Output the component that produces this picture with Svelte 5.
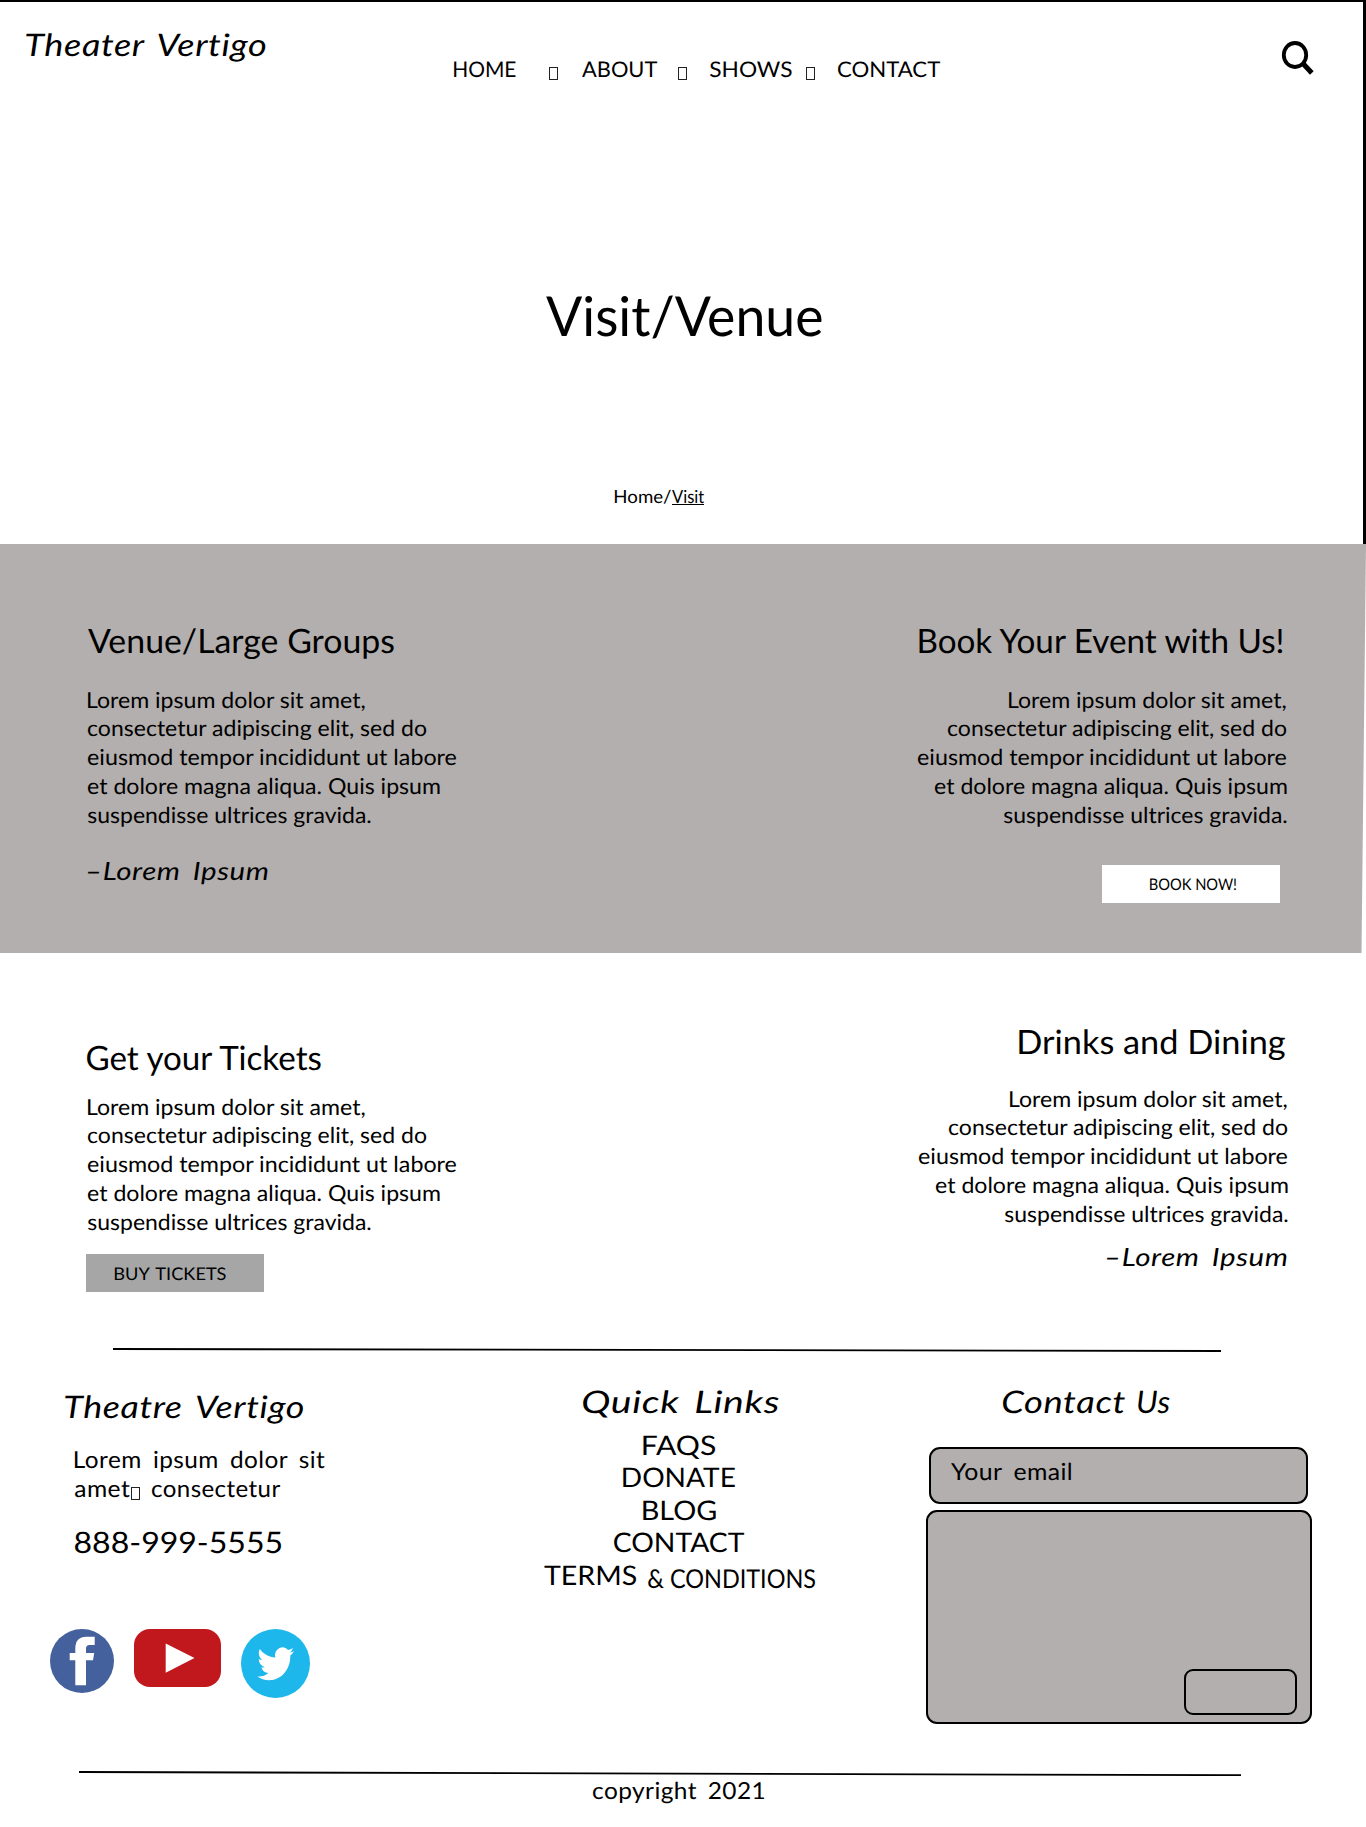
<script>
  const lorem = [
    ['Lorem ipsum dolor sit amet,', 277],
    ['consectetur adipiscing elit, sed do', 338.5],
    ['eiusmod tempor incididunt ut labore', 368.5],
    ['et dolore magna aliqua. Quis ipsum', 351.5],
    ['suspendisse ultrices gravida.', 282.5]
  ];
  const nav = [
    ['HOME', 61.5],
    ['ABOUT', 75],
    ['SHOWS', 81.5],
    ['CONTACT', 102]
  ];
  const links = [
    ['FAQS', 72],
    ['DONATE', 112],
    ['BLOG', 73],
    ['CONTACT', 130]
  ];

  // Stretches a single line of text so that its ink spans exactly `width` pixels.
  function stretch(node, width) {
    const css = getComputedStyle(node);
    const ctx = document.createElement('canvas').getContext('2d');
    // Measured at ten times the size, which keeps fractions of a pixel.
    const size = parseFloat(css.fontSize);
    ctx.font = `${css.fontStyle} ${css.fontWeight} ${size * 10}px ${css.fontFamily}`;
    const text = node.textContent;
    const m = ctx.measureText(text);
    const words = (text.split(' ').length - 1) * (parseFloat(css.wordSpacing) || 0);
    const letters = (text.length - 1) * (parseFloat(css.letterSpacing) || 0);
    const left = m.actualBoundingBoxLeft / 10;
    const ink = left + m.actualBoundingBoxRight / 10 + words + letters;
    node.style.width = `${width}px`;
    node.style.textIndent = `${left}px`;
    node.style.transform = `scaleX(${width / ink})`;
  }
</script>

{#snippet line(text, width)}<span class="line" use:stretch={width}>{text}</span>{/snippet}

{#snippet copy()}
  <p class="copy">
    {#each lorem as [text, width]}{@render line(text, width)}{/each}
  </p>
{/snippet}

<div class="page">
  <header class="hero">
    <div class="topbar">
      <a class="script logo" href="#home">{@render line('Theater Vertigo', 241)}</a>
      <nav>
        {#each nav as [label, width], i}
          <div class="nav-item">
            <a href="#{label.toLowerCase()}">{@render line(label, width)}</a>
            {#if i < nav.length - 1}<i class="box"></i>{/if}
          </div>
        {/each}
      </nav>
      <svg class="search" width="34" height="36" viewBox="0 0 34 36" aria-label="Search">
        <ellipse cx="15" cy="15" rx="11.2" ry="12" fill="none" stroke="#000" stroke-width="3.8" />
        <path d="M23 23.5 31.8 33" stroke="#000" stroke-width="5" />
      </svg>
    </div>
    <h1>{@render line('Visit/Venue', 276)}</h1>
    <div class="crumbs">{@render line('Home/', 56)}<u>{@render line('Visit', 32)}</u></div>
  </header>

  <section class="band">
    <article>
      <h2>{@render line('Venue/Large Groups', 306)}</h2>
      {@render copy()}
      <div class="script sign">{@render line('–Lorem Ipsum', 179.5)}</div>
    </article>
    <article class="right">
      <h2>{@render line('Book Your Event with Us!', 366)}</h2>
      {@render copy()}
      <button class="book">{@render line('BOOK NOW!', 86)}</button>
    </article>
  </section>

  <section class="plain">
    <article class="tickets">
      <h2>{@render line('Get your Tickets', 236.5)}</h2>
      {@render copy()}
      <button class="buy">{@render line('BUY TICKETS', 112)}</button>
    </article>
    <article class="right drinks">
      <h2>{@render line('Drinks and Dining', 266)}</h2>
      {@render copy()}
      <div class="script sign">{@render line('–Lorem Ipsum', 179.5)}</div>
    </article>
  </section>

  <svg class="rule first" width="1108" height="4" viewBox="0 0 1108 4">
    <path d="M0 1 1108 3" stroke="#000" stroke-width="1.8" />
  </svg>

  <footer>
    <div class="about">
      <div class="script brand">{@render line('Theatre Vertigo', 239)}</div>
      <div class="blurb">
        <div>{@render line('Lorem ipsum dolor sit', 250)}</div>
        <div class="blurb-row">
          {@render line('amet', 54.5)}<i class="box"></i>{@render line('consectetur', 128)}
        </div>
      </div>
      <div class="phone">{@render line('888-999-5555', 206)}</div>
      <div class="social">
        <svg width="64" height="64" viewBox="0 0 64 64" aria-label="Facebook">
          <circle cx="32" cy="32" r="32" fill="#45619d" />
          <path fill="#fff" d="M25.3 56.3V31.3H19.7V24H25.3V19.5Q25.3 7.7 36.5 7.7H44.7V16H39.5Q36 16 36 19.5V24H44.2L43 31.3H36V56.3Z" />
        </svg>
        <svg width="87" height="58" viewBox="0 0 87 58" aria-label="YouTube">
          <rect width="87" height="58" rx="16" fill="#c1181e" />
          <path fill="#fff" d="M31.7 14.5V43.7L60.5 29Z" />
        </svg>
        <svg width="69" height="69" viewBox="0 0 69 69" aria-label="Twitter">
          <circle cx="34.5" cy="34.5" r="34.5" fill="#1db7eb" />
          <path transform="translate(16.3 14.6) scale(1.53 1.68)" fill="#fff" d="M23.953 4.57a10 10 0 01-2.825.775 4.958 4.958 0 002.163-2.723c-.951.555-2.005.959-3.127 1.184a4.92 4.92 0 00-8.384 4.482C7.69 8.095 4.067 6.13 1.64 3.162a4.822 4.822 0 00-.666 2.475c0 1.71.87 3.213 2.188 4.096a4.904 4.904 0 01-2.228-.616v.06a4.923 4.923 0 003.946 4.827 4.996 4.996 0 01-2.212.085 4.936 4.936 0 004.604 3.417 9.867 9.867 0 01-6.102 2.105c-.39 0-.779-.023-1.17-.067a13.995 13.995 0 007.557 2.209c9.053 0 13.998-7.496 13.998-13.985 0-.21 0-.42-.015-.63A9.935 9.935 0 0024 4.59z" />
        </svg>
      </div>
    </div>

    <div class="quick">
      <div class="script title">{@render line('Quick Links', 196)}</div>
      {#each links as [label, width]}
        <a href="#{label.toLowerCase()}">{@render line(label, width)}</a>
      {/each}
      <a class="terms" href="#terms">
        {@render line('TERMS', 92)}<span class="cond">{@render line('& CONDITIONS', 167)}</span>
      </a>
    </div>

    <div class="contact">
      <div class="script title">{@render line('Contact', 122)}{@render line('Us', 32)}</div>
      <div class="field">{@render line('Your email', 120.5)}</div>
      <div class="message"><button class="send" aria-label="Send"></button></div>
    </div>
  </footer>

  <svg class="rule last" width="1162" height="5" viewBox="0 0 1162 5">
    <path d="M0 1 1162 4.2" stroke="#000" stroke-width="1.8" />
  </svg>
  <div class="copyright">{@render line('copyright 2021', 171)}</div>
</div>

<style>
  :global(body) {
    margin: 0;
    background: #fff;
  }
  .page {
    width: 1366px;
    height: 1827px;
    overflow: hidden;
    color: #000;
    font-family: Lato, 'Liberation Sans', sans-serif;
    text-rendering: geometricPrecision;
  }
  .page * {
    box-sizing: border-box;
  }
  .line {
    display: block;
    flex: none;
    white-space: pre;
    transform-origin: 0 50%;
  }
  svg {
    display: block;
    flex: none;
  }
  a {
    color: inherit;
    text-decoration: none;
  }
  h1,
  h2,
  p {
    margin: 0;
    font-weight: 400;
  }
  button {
    display: block;
    border: 0;
    border-radius: 0;
    padding: 0;
    color: #000;
    font-family: inherit;
    text-align: left;
    text-rendering: inherit;
  }
  .script {
    font-style: italic;
    font-size: 31px;
    line-height: 40px;
    letter-spacing: 0.5px;
    word-spacing: 4px;
  }
  .box {
    display: block;
    flex: none;
    width: 9px;
    height: 13px;
    border: 1px solid #222;
  }

  .hero {
    height: 544px;
    border-top: 2px solid #000;
    border-right: 3px solid #000;
  }
  .topbar {
    display: flex;
    align-items: flex-start;
    height: 118px;
    padding-left: 26px;
  }
  .logo {
    width: 427.5px;
    padding-top: 22px;
  }
  nav {
    display: grid;
    grid-template-columns: repeat(4, 128.3px);
    padding-top: 54px;
    font-size: 21.5px;
    line-height: 26px;
  }
  .nav-item {
    display: flex;
  }
  .nav-item a {
    flex: none;
    width: 95.8px;
  }
  .nav-item:last-child a {
    width: auto;
  }
  .nav-item .box {
    margin-top: 10.5px;
  }
  .search {
    margin: 38px 0 0 313px;
  }
  h1 {
    margin: 162.4px 0 0 545.5px;
    font-size: 55px;
    line-height: 66px;
  }
  .crumbs {
    display: flex;
    gap: 0.5px;
    margin: 136.6px 0 0 615px;
    font-size: 18px;
    line-height: 22px;
  }
  .crumbs u {
    height: 20.5px;
    border-bottom: 1px solid #000;
    text-decoration: none;
  }

  .band,
  .plain {
    display: flex;
    justify-content: space-between;
    align-items: flex-start;
  }
  .band {
    height: 409px;
    padding: 77px 80px 0 88px;
    background: #b3afae;
    clip-path: polygon(0 0, 100% 0, 1361.5px 100%, 0 100%);
  }
  .plain {
    height: 395px;
    padding: 0 79px 0 87px;
  }
  .right {
    display: flex;
    flex-direction: column;
    align-items: flex-end;
  }
  h2 {
    font-size: 33.5px;
    line-height: 40px;
  }
  .copy {
    padding-top: 24.6px;
    font-size: 22px;
    line-height: 28.8px;
  }
  .right .copy {
    display: flex;
    flex-direction: column;
    align-items: flex-end;
  }
  .right h2 {
    margin-right: 1px;
  }
  .sign {
    margin-top: 26.4px;
    font-size: 25px;
    line-height: 30px;
  }
  .book,
  .buy {
    width: 178px;
    height: 38px;
    line-height: 20px;
  }
  .book {
    margin: 35.4px 6px 0 0;
    padding: 1.5px 0 0 48px;
    background: #fff;
    font-size: 16px;
  }
  .tickets {
    padding-top: 85px;
  }
  .tickets .copy {
    padding: 14.5px 0 0 1px;
  }
  .buy {
    margin: 17.5px 0 0 -1px;
    padding: 2px 0 0 29px;
    background: #a6a6a6;
    font-size: 17.5px;
    word-spacing: 2px;
  }
  .drinks {
    padding-top: 69px;
  }
  .drinks h2 {
    margin-right: 2px;
  }
  .drinks .copy {
    padding-top: 22.5px;
  }
  .drinks .sign {
    margin: 13.7px 1px 0 0;
  }

  .rule.first {
    margin-left: 113px;
  }
  .rule.last {
    margin-left: 79px;
  }
  footer {
    display: grid;
    grid-template-columns: 500px 358px 508px;
    height: 419px;
  }
  .about {
    padding: 34px 0 0 50px;
  }
  .brand {
    padding-left: 15px;
  }
  .blurb {
    margin: 20.2px 0 0 24.5px;
    font-size: 23.5px;
    line-height: 28.5px;
    letter-spacing: 0.4px;
    word-spacing: 4.5px;
  }
  .blurb-row {
    display: flex;
  }
  .blurb-row .box {
    margin: 12.5px 12px 0 1.5px;
  }
  .phone {
    margin: 22px 0 0 24.5px;
    font-size: 29.5px;
    line-height: 36px;
  }
  .social {
    display: flex;
    gap: 20px;
    margin-top: 67.8px;
  }
  .quick {
    display: flex;
    flex-direction: column;
    align-items: center;
    padding-top: 29px;
    font-size: 27px;
    line-height: 32.5px;
  }
  .quick .title {
    margin: 0 0 7.8px 4px;
  }
  .terms {
    display: flex;
    gap: 12px;
  }
  .cond {
    margin-top: 3.2px;
    font-size: 26px;
  }
  .contact {
    padding: 29px 0 0 68px;
  }
  .contact .title {
    display: flex;
    gap: 13px;
    margin-left: 77px;
  }
  .field {
    width: 379px;
    height: 57px;
    margin: 26px 0 0 3px;
    padding: 9px 0 0 20px;
    border: 2px solid #000;
    border-radius: 11px;
    background: #b3afae;
    font-size: 23.5px;
    line-height: 28px;
    letter-spacing: 0.4px;
    word-spacing: 4.5px;
  }
  .message {
    display: flex;
    justify-content: flex-end;
    align-items: flex-end;
    width: 386px;
    height: 214px;
    margin-top: 6px;
    padding: 0 13px 7px 0;
    border: 2px solid #000;
    border-radius: 11px;
    background: #b3afae;
  }
  .send {
    width: 113px;
    height: 46px;
    border: 2px solid #000;
    border-radius: 9px;
    background: none;
  }
  .copyright {
    margin: 1px 0 0 592.5px;
    font-size: 23.5px;
    line-height: 28px;
    letter-spacing: 0.4px;
    word-spacing: 4px;
  }
</style>
